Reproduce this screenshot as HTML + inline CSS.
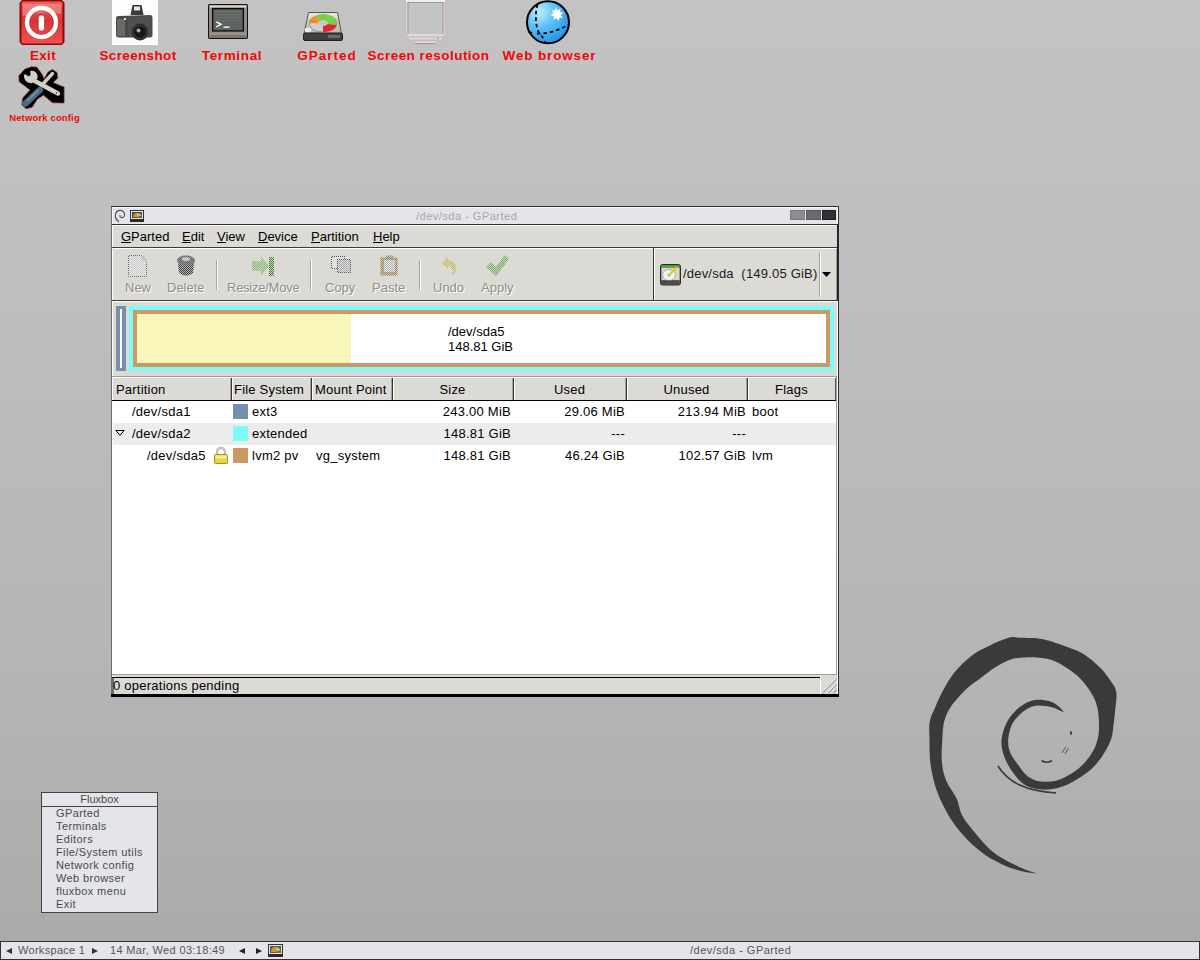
<!DOCTYPE html>
<html><head><meta charset="utf-8">
<style>
*{margin:0;padding:0;box-sizing:border-box}
html,body{width:1200px;height:960px;overflow:hidden}
body{position:relative;background:linear-gradient(to bottom,#c3c3c3 0px,#bebebe 300px,#b4b4b4 700px,#aaaaaa 960px);font-family:"Liberation Sans",sans-serif;color:#000}
.a{position:absolute}
.lbl{position:absolute;color:#ee0808;font-weight:bold;font-size:13.5px;letter-spacing:0.35px;white-space:nowrap;text-align:center;line-height:16px}
.t13{font-size:13px;line-height:16px;white-space:nowrap}
.dis{color:#8f8d88;text-shadow:1px 1px 0 #fff}
.hdr{position:absolute;top:379px;height:22px;font-size:13px;line-height:22px;white-space:nowrap;letter-spacing:0.2px}
.cell{position:absolute;font-size:13px;line-height:16px;white-space:nowrap;color:#000;letter-spacing:0.25px}
.fm{position:absolute;left:56px;font-size:11px;letter-spacing:0.4px;color:#4a4a4a;line-height:13px;white-space:nowrap}
</style></head><body>

<!-- debian swirl -->
<svg class="a" style="left:0;top:0" width="1200" height="960"><path d="M1036.0,873.5 C1034.7,873.5 1027.3,872.6 1022.1,871.3 C1016.9,869.9 1010.7,868.1 1004.6,865.4 C998.5,862.7 991.7,859.3 985.6,855.2 C979.5,851.1 973.5,846.0 968.1,840.6 C962.8,835.2 957.9,829.4 953.5,823.1 C949.1,816.8 945.0,809.2 941.9,802.7 C938.8,796.2 936.5,790.6 934.6,783.8 C932.7,777.0 931.1,769.2 930.2,761.9 C929.4,754.6 929.6,746.7 929.5,740.0 C929.4,733.3 928.8,727.1 929.7,721.7 C930.6,716.4 932.7,713.1 934.9,707.9 C937.1,702.7 939.6,696.6 942.9,690.7 C946.1,684.8 949.6,678.2 954.4,672.4 C959.2,666.6 965.9,660.2 971.6,655.8 C977.3,651.4 982.5,649.0 988.8,646.0 C995.1,643.0 1004.2,639.0 1009.4,637.6 C1014.6,636.2 1014.4,637.5 1020.0,637.8 C1025.6,638.1 1034.9,637.6 1042.9,639.2 C1050.9,640.8 1061.2,644.7 1068.1,647.2 C1075.0,649.8 1078.8,651.1 1084.2,654.5 C1089.6,657.9 1095.9,663.5 1100.2,667.8 C1104.5,672.0 1107.3,676.0 1110.0,680.0 C1112.7,684.0 1115.5,686.7 1116.3,692.0 C1117.1,697.3 1115.5,706.5 1115.0,712.0 C1114.5,717.5 1114.1,720.7 1113.5,725.0 C1112.9,729.3 1112.8,733.8 1111.5,738.0 C1110.2,742.2 1108.3,746.0 1106.0,750.0 C1103.7,754.0 1100.8,758.6 1097.9,762.1 C1095.0,765.6 1092.6,768.2 1088.8,771.3 C1085.0,774.3 1079.8,777.7 1075.0,780.4 C1070.2,783.1 1065.4,785.8 1060.1,787.3 C1054.8,788.8 1048.4,789.8 1042.9,789.6 C1037.4,789.4 1031.6,788.5 1026.9,786.1 C1022.2,783.7 1018.5,779.8 1014.8,775.0 C1011.1,770.2 1006.8,763.3 1004.6,757.5 C1002.4,751.7 1001.1,746.0 1001.5,740.0 C1001.9,734.0 1004.5,726.9 1007.1,721.7 C1009.8,716.5 1013.6,712.4 1017.4,709.0 C1021.2,705.6 1025.8,702.8 1030.0,701.3 C1034.2,699.8 1038.8,699.6 1042.9,699.9 C1047.0,700.2 1051.0,701.3 1054.4,703.3 C1057.8,705.3 1063.9,711.2 1063.5,711.9 C1063.1,712.6 1056.4,708.3 1052.0,707.3 C1047.6,706.2 1041.4,705.3 1037.2,705.6 C1033.0,705.9 1029.9,707.5 1027.0,709.0 C1024.1,710.5 1022.2,712.1 1019.7,714.8 C1017.2,717.5 1013.6,720.8 1011.7,725.0 C1009.8,729.2 1008.4,735.3 1008.2,740.0 C1008.0,744.7 1008.6,748.7 1010.4,753.1 C1012.2,757.5 1016.3,762.4 1019.2,766.3 C1022.1,770.2 1024.4,774.0 1028.0,776.5 C1031.6,779.0 1035.8,781.0 1040.6,781.6 C1045.4,782.2 1051.5,781.8 1056.7,780.4 C1061.9,779.0 1067.0,776.4 1071.6,773.5 C1076.2,770.6 1080.6,767.0 1084.2,763.2 C1087.8,759.4 1091.0,754.8 1093.3,750.6 C1095.6,746.4 1097.0,741.9 1097.9,738.0 C1098.9,734.1 1099.0,731.6 1099.0,727.0 C1099.0,722.4 1098.9,715.3 1097.9,710.2 C1097.0,705.1 1095.8,701.3 1093.3,696.5 C1090.8,691.7 1086.6,685.8 1083.0,681.6 C1079.4,677.4 1076.4,674.7 1071.6,671.3 C1066.8,667.9 1060.1,663.3 1054.4,661.0 C1048.7,658.7 1042.9,658.0 1037.2,657.5 C1031.5,657.0 1024.9,657.3 1020.0,657.8 C1015.1,658.3 1012.2,658.8 1008.0,660.5 C1003.8,662.2 999.0,664.9 994.5,667.8 C990.0,670.7 985.5,674.5 980.7,678.1 C975.9,681.7 970.8,684.8 965.8,689.6 C960.8,694.4 954.5,701.4 950.9,706.8 C947.3,712.1 945.5,716.2 944.1,721.7 C942.7,727.2 942.7,733.3 942.3,740.0 C941.9,746.7 941.2,755.1 941.9,761.9 C942.5,768.7 943.8,774.7 946.2,780.8 C948.6,786.9 953.8,792.5 956.5,798.3 C959.2,804.1 959.1,810.0 962.3,815.8 C965.4,821.6 970.8,827.7 975.4,833.3 C980.0,838.9 985.1,845.0 990.0,849.4 C994.9,853.8 999.7,856.7 1004.6,859.6 C1009.5,862.5 1015.0,865.0 1019.2,866.9 C1023.4,868.8 1027.2,870.2 1030.0,871.3 C1032.8,872.4 1037.3,873.5 1036.0,873.5Z" fill="#3a3a3a"/>
<path d="M998,766 C1008,782 1025,791 1056,793" fill="none" stroke="#3a3a3a" stroke-width="1.6"/>
<ellipse cx="1071" cy="733" rx="1" ry="2" fill="#3a3a3a"/>
<path d="M1041.5,760.5 Q1047,764 1052,760.5" fill="none" stroke="#3a3a3a" stroke-width="1.6"/>
<path d="M1062,753 L1066,746.5 M1065,754 L1068.5,748" stroke="#3a3a3a" stroke-width="0.8"/>
</svg>

<!-- ===== Desktop icons ===== -->
<div id="icons">
<!-- Exit -->
<svg class="a" style="left:19px;top:0px" width="46" height="46" viewBox="0 0 46 46">
  <defs>
    <linearGradient id="exg" x1="0" y1="0" x2="0" y2="1"><stop offset="0" stop-color="#f06060"/><stop offset="0.45" stop-color="#d83434"/><stop offset="1" stop-color="#f25050"/></linearGradient>
  </defs>
  <path d="M3,0 H43 L45.5,3 V42 L43,45 H3 L0.5,42 V3Z" fill="#8a0a0a"/>
  <rect x="2.5" y="1.5" width="41" height="42" rx="2" fill="url(#exg)"/>
  <path d="M4,4 H42 V14 Q23,10 4,16Z" fill="#f8b0b0" opacity="0.45"/>
  <circle cx="22.5" cy="22.5" r="14.4" fill="none" stroke="#fff" stroke-width="4.6"/>
  <circle cx="22.5" cy="22.5" r="12" fill="none" stroke="#a01818" stroke-width="0.8" opacity="0.6"/>
  <rect x="19.3" y="15" width="6.2" height="16" rx="3.1" fill="#fff" stroke="#901010" stroke-width="0.5"/>
</svg>
<!-- Screenshot -->
<svg class="a" style="left:112px;top:0px" width="46" height="46" viewBox="0 0 46 46">
  <rect x="0" y="0" width="46" height="45" fill="#fdfdfd"/>
  <path d="M20.5,5 H29.5 L31.5,15 H18.5Z" fill="#3a3a3a"/>
  <rect x="22" y="6.5" width="6" height="4" fill="#e8e8e8"/>
  <path d="M4,18 Q4,16 7,16 L38,15 Q40.5,15 40.5,18 V35 Q40.5,37.5 38,37.5 H7 Q4,37.5 4,35Z" fill="#4a4a48"/>
  <rect x="5" y="19" width="8" height="17" fill="#6e6a62"/>
  <path d="M16,17 H38 V36 H16Z" fill="#505050"/>
  <circle cx="28" cy="32" r="8.5" fill="#2a3036"/>
  <circle cx="28" cy="32" r="5.5" fill="#15181a"/>
  <circle cx="26.5" cy="30.5" r="2" fill="#d0d0d0" opacity="0.8"/>
  <rect x="12" y="18" width="2" height="2" fill="#ddd"/>
</svg>
<!-- Terminal -->
<svg class="a" style="left:208px;top:4px" width="40" height="36" viewBox="0 0 40 36">
  <rect x="0.5" y="0.5" width="39" height="34" rx="1.5" fill="#98928a" stroke="#151515" stroke-width="1.2"/>
  <rect x="1.5" y="1.5" width="37" height="2" fill="#d8d4cc"/>
  <rect x="4.5" y="4.5" width="31" height="22.5" fill="#4a4e4a" stroke="#0a0a0a" stroke-width="1.2"/>
  <rect x="6" y="6" width="28" height="20" fill="#6a726c" opacity="0.6"/>
  <rect x="6" y="7" width="28" height="1" fill="#7a827c" opacity="0.6"/><rect x="6" y="10" width="28" height="1" fill="#7a827c" opacity="0.5"/><rect x="6" y="13" width="28" height="1" fill="#7a827c" opacity="0.5"/><rect x="6" y="16" width="28" height="1" fill="#7a827c" opacity="0.4"/>
  <path d="M8.3,17.8 L13,20.3 L8.3,22.8" fill="none" stroke="#fff" stroke-width="1.4"/>
  <rect x="15.5" y="22.5" width="6" height="1.3" fill="#fff"/>
  <rect x="2" y="31" width="36" height="3" fill="#7a766e"/>
</svg>
<!-- GParted -->
<svg class="a" style="left:303px;top:12px" width="40" height="29" viewBox="0 0 40 29">
  <defs><linearGradient id="gpb" x1="0" y1="0" x2="0" y2="1"><stop offset="0" stop-color="#e8e8e6"/><stop offset="1" stop-color="#b0b0ae"/></linearGradient></defs>
  <path d="M5.5,0.5 H34.5 L38.5,22 H1Z" fill="url(#gpb)" stroke="#555" stroke-width="1"/>
  <rect x="0.5" y="21" width="39" height="7.5" rx="1.5" fill="#3e403e" stroke="#222"/>
  <rect x="25" y="23" width="12" height="3" fill="#8a8a88" opacity="0.6"/>
  <ellipse cx="20" cy="11.5" rx="14" ry="8.5" fill="#cfcfcd" stroke="#777" stroke-width="0.6"/>
  <path d="M20,11.5 L8,6.5 A14,8.5 0 0 1 12,4 Z" fill="#f09020"/>
  <path d="M20,11.5 L12,4 A14,8.5 0 0 1 34,13 L20,11.5Z" fill="#78d048"/>
  <path d="M20,11.5 L34,13 A14,8.5 0 0 1 20,20 Z" fill="#e02828"/>
  <path d="M20,11.5 L6,11 A14,8.5 0 0 1 8,6.5 Z" fill="#f08a20"/>
  <ellipse cx="20" cy="11" rx="5" ry="3" fill="#c8c8c6"/>
  <ellipse cx="5" cy="18" rx="3.5" ry="2.2" fill="#eee"/>
</svg>
<!-- Screen resolution -->
<svg class="a" style="left:405px;top:0px" width="42" height="46" viewBox="0 0 42 46">
  <rect x="0.5" y="-1" width="40" height="38" fill="#d4d4d4" stroke="#dca8c0" stroke-width="0.8"/>
  <rect x="1" y="0" width="39" height="2" fill="#eeeeec"/>
  <rect x="3" y="2.5" width="35" height="32" fill="#c4c4c4" stroke="#9a9a9a" stroke-width="1"/>
  <rect x="3" y="34" width="35" height="2" fill="#dcdcdc"/>
  <rect x="3.5" y="37" width="34" height="3" fill="#d8d8d8" stroke="#d8a8c0" stroke-width="0.6"/>
  <rect x="9.5" y="41" width="22" height="3.5" fill="#dedede" stroke="#d8a8c0" stroke-width="0.6"/>
  <rect x="10" y="43" width="21" height="1" fill="#999"/>
  <rect x="32" y="37.5" width="1.5" height="1.5" fill="#5c5"/>
</svg>
<!-- Web browser -->
<svg class="a" style="left:525px;top:0px" width="46" height="46" viewBox="0 0 46 46">
  <defs><radialGradient id="glb" cx="0.3" cy="0.25" r="0.85"><stop offset="0" stop-color="#c0ecff"/><stop offset="0.45" stop-color="#5cc0f8"/><stop offset="1" stop-color="#1890e8"/></radialGradient></defs>
  <circle cx="23" cy="22.3" r="21" fill="url(#glb)" stroke="#000" stroke-width="2"/>
  <path d="M12.5,4.5 C10.5,12 10,22 13,31 C15,34 18,37 20,42" fill="none" stroke="#000" stroke-width="1.8" stroke-dasharray="3.5,3"/>
  <path d="M12,33.5 C22,34 32,31 44,24.5" fill="none" stroke="#000" stroke-width="1.8" stroke-dasharray="3.5,3"/><path d="M3,31.5 L7,33" stroke="#000" stroke-width="1.5"/>
  <path d="M31,7 L32.3,10.5 L35.5,8.5 L35,12 L38.7,12.8 L35.8,15 L38,18 L34.5,17.5 L33.5,21 L31.5,18 L28.5,20 L29,16.5 L25.5,15 L28.5,13 L26.5,10 L30,10.5Z" fill="#fff"/>
</svg>
<!-- Network config -->
<svg class="a" style="left:17px;top:65px" width="49" height="46" viewBox="0 0 49 46">
  <path d="M1.8,10.8 L7.8,4.0 L14.5,1.8 L19.8,2.1 L25.0,9.2 L27.2,13.8 L31.0,7.0 L35.5,4.4 L40.0,7.4 L40.8,13.0 L36.2,17.5 L43.0,20.5 L47.1,22.0 L47.1,38.0 L35.5,37.8 L26.5,30.2 L20.5,34.0 L15.2,42.2 L9.2,43.8 L4.8,40.0 L5.5,33.2 L13.0,25.0 L6.2,19.8 L2.1,16.8Z" fill="#000" stroke="#a03030" stroke-width="0.7" stroke-linejoin="round"/>
  <path d="M35.5,8.5 L25,20" stroke="#cfcfc8" stroke-width="3.4" stroke-linecap="round"/>
  <path d="M22.8,25 L8.5,38.5" stroke="#4a6a8a" stroke-width="6.5" stroke-linecap="round"/>
  <path d="M21,25.5 L10.5,35.5" stroke="#8aa8c8" stroke-width="1.6" stroke-linecap="round" opacity="0.7"/>
  <path d="M16,15 L41,28.5" stroke="#d4d0c6" stroke-width="4.4" stroke-linecap="round"/>
  <path d="M15.5,17.5 C11,18 7,14.5 8,10 L11.5,12.5 L14.5,10.5 L14,6.5 C18,6 21,10 19.5,14" fill="#d4d0c6" stroke="#d4d0c6" stroke-width="1.6" stroke-linejoin="round"/>
  <circle cx="39.5" cy="27.8" r="0.9" fill="#555"/>
</svg>
<div class="lbl" style="left:3px;top:48px;width:80px">Exit</div>
<div class="lbl" style="left:88px;top:48px;width:100px">Screenshot</div>
<div class="lbl" style="left:181px;top:48px;width:100px;letter-spacing:0.64px;padding-left:2px">Terminal</div>
<div class="lbl" style="left:276px;top:48px;width:100px;letter-spacing:1.0px;padding-left:2px">GParted</div>
<div class="lbl" style="left:358px;top:48px;width:140px;letter-spacing:0.47px;padding-left:1px">Screen resolution</div>
<div class="lbl" style="left:499px;top:48px;width:100px;letter-spacing:0.85px;padding-left:1px">Web browser</div>
<div class="lbl" style="left:0px;top:112px;width:89px;font-size:9.5px;letter-spacing:0.15px;line-height:12px">Network config</div>
</div>

<!-- ===== Window ===== -->
<div id="win">
  <div class="a" style="left:111px;top:206px;width:728px;height:491px;background:#2e2e2e"></div>
  <div class="a" style="left:111px;top:207px;width:1px;height:488px;background:#6c6c6c"></div>
  <!-- title bar -->
  <div class="a" style="left:112px;top:207px;width:726px;height:17px;background:#e4e5ea;border-top:1px solid #fafafc;border-left:1px solid #fafafc;border-right:1px solid #fafafc"></div>
  <div class="a" style="left:416px;top:209px;height:15px;font-size:11px;letter-spacing:0.5px;line-height:15px;color:#a6a6a8;white-space:nowrap">/dev/sda - GParted</div>
  <svg class="a" style="left:114px;top:209px" width="13" height="14" viewBox="0 0 13 14"><path d="M5,12.8 C2.2,11 1,8.2 1.5,5.5 C2,2.8 4.2,1.3 6.5,1.4 C9,1.5 10.8,3.5 10.6,5.8 C10.4,8 8.6,9 7.2,8.6 C6,8.2 5.6,7 6.2,6" fill="none" stroke="#4a4a4a" stroke-width="1.1"/></svg>
  <svg class="a" style="left:130px;top:210px" width="14" height="12" viewBox="0 0 14 12"><rect x="0.5" y="0.5" width="13" height="11" fill="#e8e8e0" stroke="#333"/><rect x="2" y="2" width="10" height="6" fill="#445"/><path d="M3,7 Q3,3 7,3 L7,7Z" fill="#f08a20"/><path d="M7,3 Q11,3 11.5,6 L7,7Z" fill="#8ce06a"/><path d="M7,7 L11.5,6 L11,8 L7,8Z" fill="#e03838"/><rect x="0" y="9" width="14" height="3" fill="#2a2a2a"/></svg>
  <div class="a" style="left:790px;top:210px;width:15px;height:10px;background:#8d8d8d;border:1px solid #7a7a7a"></div>
  <div class="a" style="left:806px;top:210px;width:15px;height:10px;background:#6b6b6b;border:1px solid #5a5a5a"></div>
  <div class="a" style="left:822px;top:210px;width:14px;height:10px;background:#333;border:1px solid #1e1e1e"></div>

  <!-- client bg -->
  <div class="a" style="left:112px;top:225px;width:726px;height:470px;background:#dcdad5;border-left:1px solid #fff"></div>
  <div class="a" style="left:837px;top:225px;width:1px;height:76px;background:#1e1e1e"></div><div class="a" style="left:837px;top:301px;width:1px;height:393px;background:#fff"></div><div class="a" style="left:836px;top:248px;width:1px;height:52px;background:#a09d95"></div>

  <!-- menubar -->
  <div class="a" style="left:112px;top:225px;width:725px;height:1px;background:#fff"></div>
  <div class="a" style="left:112px;top:247px;width:725px;height:1px;background:#3c3b37"></div>
  <div class="a t13" style="left:121px;top:229px">GParted</div>
  <div class="a t13" style="left:182px;top:229px">Edit</div>
  <div class="a t13" style="left:217px;top:229px">View</div>
  <div class="a t13" style="left:258px;top:229px">Device</div>
  <div class="a t13" style="left:311px;top:229px">Partition</div>
  <div class="a t13" style="left:373px;top:229px">Help</div>
  <div class="a" style="left:121px;top:242px;width:10px;height:1px;background:#000"></div>
  <div class="a" style="left:182px;top:242px;width:9px;height:1px;background:#000"></div>
  <div class="a" style="left:217px;top:242px;width:9px;height:1px;background:#000"></div>
  <div class="a" style="left:258px;top:242px;width:10px;height:1px;background:#000"></div>
  <div class="a" style="left:311px;top:242px;width:9px;height:1px;background:#000"></div>
  <div class="a" style="left:373px;top:242px;width:10px;height:1px;background:#000"></div>

  <!-- toolbar -->
  <div class="a" style="left:112px;top:248px;width:725px;height:1px;background:#fff"></div>
  <div class="a" style="left:112px;top:300px;width:725px;height:1px;background:#3c3b37"></div>
  <div class="a" style="left:653px;top:248px;width:1px;height:52px;background:#3c3b37"></div>
  <div class="a" style="left:654px;top:248px;width:1px;height:52px;background:#fff"></div>
  <div class="a" style="left:216px;top:260px;width:1px;height:30px;background:#a8a59e"></div>
  <div class="a" style="left:217px;top:260px;width:1px;height:30px;background:#fff"></div>
  <div class="a" style="left:310px;top:260px;width:1px;height:30px;background:#a8a59e"></div>
  <div class="a" style="left:311px;top:260px;width:1px;height:30px;background:#fff"></div>
  <div class="a" style="left:419px;top:260px;width:1px;height:30px;background:#a8a59e"></div>
  <div class="a" style="left:420px;top:260px;width:1px;height:30px;background:#fff"></div>
  <div class="a t13 dis" style="left:125px;top:280px">New</div>
  <div class="a t13 dis" style="left:167px;top:280px">Delete</div>
  <div class="a t13 dis" style="left:227px;top:280px;letter-spacing:-0.25px">Resize/Move</div>
  <div class="a t13 dis" style="left:325px;top:280px">Copy</div>
  <div class="a t13 dis" style="left:372px;top:280px">Paste</div>
  <div class="a t13 dis" style="left:433px;top:280px">Undo</div>
  <div class="a t13 dis" style="left:481px;top:280px">Apply</div>
  <svg class="a" style="left:112px;top:248px" width="420" height="40" viewBox="112 248 420 40">
  <defs>
    <pattern id="dth" patternUnits="userSpaceOnUse" x="0" y="0" width="2" height="2"><rect x="0" y="0" width="1" height="1" fill="#fff"/><rect x="1" y="1" width="1" height="1" fill="#fff"/></pattern>
    <mask id="dm"><rect x="112" y="248" width="420" height="40" fill="url(#dth)"/></mask>
    <pattern id="dthw" patternUnits="userSpaceOnUse" width="2" height="2"><rect x="1" y="0" width="1" height="1" fill="#fff"/><rect x="0" y="1" width="1" height="1" fill="#fff"/></pattern>
    <mask id="dmw"><rect x="112" y="248" width="420" height="40" fill="#fff"/><rect x="112" y="248" width="420" height="40" fill="url(#dth)"/></mask>
  </defs>
  <!-- New -->
  <g>
    <path d="M128.5,255.5 H141.5 L146.5,261 V276.5 H128.5Z" fill="#e6e6e6"/>
    <path d="M128.5,255.5 H141.5 L146.5,261 V276.5 H128.5Z" fill="none" stroke="#6a6a6a" stroke-width="1" mask="url(#dm)"/>
    <path d="M141.5,255.5 V261 H146.5" fill="#cfcfcf"/>
    <rect x="129" y="256" width="17" height="20" fill="#bdbdbd" mask="url(#dm)" opacity="0.6"/>
  </g>
  <!-- Delete -->
  <g>
    <path d="M178,263 H194 L193,273 Q186,278.5 179,273Z" fill="#a8a8a8" opacity="0.6"/>
    <path d="M178,263 H194 L193,273 Q186,278.5 179,273Z" fill="#3a3a3a" mask="url(#dm)"/>
    <ellipse cx="186" cy="260.5" rx="9" ry="5" fill="#8e8e8e"/>
    <ellipse cx="186" cy="260.5" rx="9" ry="5" fill="#555" mask="url(#dm)" opacity="0.6"/>
    <ellipse cx="186" cy="259" rx="4" ry="2" fill="#c4c4c4"/>
  </g>
  <!-- Resize/Move -->
  <g mask="url(#dm)">
    <path d="M252,261 H261 V257 L269,266 L261,275 V271 H252Z" fill="#5a9048"/>
    <rect x="269" y="257" width="5" height="19" fill="#3a7a2a"/>
  </g>
  <path d="M252,261 H261 V257 L269,266 L261,275 V271 H252Z" fill="#b8d4a8" opacity="0.6"/>
  <!-- Copy -->
  <g>
    <rect x="331" y="256" width="14" height="13" fill="#e0e0e0"/>
    <rect x="331.5" y="256.5" width="13" height="12" fill="none" stroke="#555" mask="url(#dm)"/>
    <rect x="337" y="259" width="14" height="14" fill="#d8d8d8"/>
    <rect x="337.5" y="259.5" width="13" height="13" fill="none" stroke="#555" mask="url(#dm)"/>
    <rect x="338" y="260" width="12" height="12" fill="#888" mask="url(#dm)" opacity="0.5"/>
  </g>
  <!-- Paste -->
  <g>
    <rect x="380.5" y="257.5" width="17" height="18" fill="#7a5a2a" mask="url(#dm)"/>
    <rect x="381" y="258" width="16" height="17" fill="#c4ae88" opacity="0.5"/>
    <rect x="384" y="260" width="11" height="12" fill="#e8e8e8"/>
    <rect x="384" y="260" width="11" height="12" fill="#777" mask="url(#dm)" opacity="0.5"/>
    <rect x="386" y="255.5" width="7" height="4" fill="#777" mask="url(#dm)"/>
  </g>
  <!-- Undo -->
  <g mask="url(#dm)">
    <path d="M442,263 L448,257 V260.5 C453,260.5 457,264 456,270 C455.5,272.5 454,274 452,275 C453.5,272 453,266 448,266 V269Z" fill="#a89428"/>
  </g>
  <path d="M442,263 L448,257 V260.5 C453,260.5 457,264 456,270 C455.5,272.5 454,274 452,275 C453.5,272 453,266 448,266 V269Z" fill="#e0d8a0" opacity="0.5"/>
  <!-- Apply -->
  <path d="M487,267 L491,263 L496,268 L505,256 L508,259 L496,275Z" fill="#c4dcb8" stroke="#c4dcb8" stroke-width="1.5" stroke-linejoin="round"/>
  <path d="M487,267 L491,263 L496,268 L505,256 L508,259 L496,275Z" fill="#7aa86a" stroke="#7aa86a" stroke-width="1.5" stroke-linejoin="round" mask="url(#dm)"/>
</svg>


  <!-- device combo -->
  <svg class="a" style="left:660px;top:264px" width="21" height="22" viewBox="0 0 21 22">
  <rect x="0.5" y="0.5" width="20" height="20.5" rx="2" fill="#6a6c68" stroke="#2a2a2a"/>
  <rect x="1.5" y="1.5" width="18" height="4" fill="#5aa840"/>
  <rect x="1.5" y="4" width="18" height="12" fill="#d8d8d0"/>
  <ellipse cx="9" cy="11" rx="6.5" ry="5.5" fill="#f4f4ec" stroke="#9a9a90" stroke-width="0.8"/>
  <ellipse cx="9" cy="11" rx="2" ry="1.6" fill="#b8b8b0"/>
  <path d="M10,10 L17,3" stroke="#e8c020" stroke-width="2"/>
  <rect x="1.5" y="16.5" width="18" height="4" fill="#4a4c48"/>
</svg>

  <div class="a t13" style="left:683px;top:266px;letter-spacing:0.2px;color:#1a1a1a">/dev/sda&nbsp;&nbsp;(149.05 GiB)</div>
  <div class="a" style="left:819px;top:252px;width:1px;height:45px;background:#a8a59e"></div>
  <div class="a" style="left:820px;top:252px;width:1px;height:45px;background:#fff"></div>
  <svg class="a" style="left:822px;top:272px" width="9" height="5"><path d="M0,0 L9,0 L4.5,5Z" fill="#000"/></svg>

  <!-- partition graph -->
  <div class="a" style="left:112px;top:301px;width:725px;height:1px;background:#fff"></div>
  <div class="a" style="left:116px;top:306px;width:10px;height:65px;background:#7390ae"></div>
  <div class="a" style="left:120px;top:309px;width:2px;height:59px;background:#fff"></div>
  <div class="a" style="left:129px;top:306px;width:705px;height:65px;background:#7dfbfb"></div>
  <div class="a" style="left:133px;top:310px;width:697px;height:57px;background:#cc9966"></div>
  <div class="a" style="left:137px;top:314px;width:689px;height:49px;background:#fff"></div>
  <div class="a" style="left:137px;top:314px;width:214px;height:49px;background:#f8f6b8"></div>
  <div class="a t13" style="left:448px;top:324px;line-height:15px">/dev/sda5<br>148.81 GiB</div>

  <!-- tree -->
  <div class="a" style="left:112px;top:376px;width:725px;height:1px;background:#a09d95"></div>
  <div class="a" style="left:112px;top:377px;width:724px;height:297px;background:#fff"></div>
  <div class="a" style="left:836px;top:377px;width:1px;height:298px;background:#a09d95"></div>
  <div class="a" style="left:112px;top:674px;width:725px;height:1px;background:#a09d95"></div>
  <div class="a" style="left:113px;top:378px;width:723px;height:22px;background:#dcdad5"></div>
  <div class="a" style="left:112px;top:400px;width:724px;height:1px;background:#000"></div>
    <div class="hdr" style="left:116px">Partition</div>
  <div class="hdr" style="left:234px">File System</div>
  <div class="hdr" style="left:315px">Mount Point</div>
  <div class="hdr" style="left:392px;width:121px;text-align:center">Size</div>
  <div class="hdr" style="left:513px;width:113px;text-align:center">Used</div>
  <div class="hdr" style="left:626px;width:121px;text-align:center">Unused</div>
  <div class="hdr" style="left:747px;width:89px;text-align:center">Flags</div>
  <div class="a" style="left:113px;top:423px;width:723px;height:22px;background:#ececec"></div>
  <div id="rows">
  <div class="a" style="left:230px;top:378px;width:1px;height:22px;background:#a8a49c"></div><div class="a" style="left:231px;top:378px;width:1px;height:22px;background:#333"></div><div class="a" style="left:232px;top:378px;width:1px;height:22px;background:#fff"></div>
  <div class="a" style="left:310px;top:378px;width:1px;height:22px;background:#a8a49c"></div><div class="a" style="left:311px;top:378px;width:1px;height:22px;background:#333"></div><div class="a" style="left:312px;top:378px;width:1px;height:22px;background:#fff"></div>
  <div class="a" style="left:391px;top:378px;width:1px;height:22px;background:#a8a49c"></div><div class="a" style="left:392px;top:378px;width:1px;height:22px;background:#333"></div><div class="a" style="left:393px;top:378px;width:1px;height:22px;background:#fff"></div>
  <div class="a" style="left:512px;top:378px;width:1px;height:22px;background:#a8a49c"></div><div class="a" style="left:513px;top:378px;width:1px;height:22px;background:#333"></div><div class="a" style="left:514px;top:378px;width:1px;height:22px;background:#fff"></div>
  <div class="a" style="left:625px;top:378px;width:1px;height:22px;background:#a8a49c"></div><div class="a" style="left:626px;top:378px;width:1px;height:22px;background:#333"></div><div class="a" style="left:627px;top:378px;width:1px;height:22px;background:#fff"></div>
  <div class="a" style="left:746px;top:378px;width:1px;height:22px;background:#a8a49c"></div><div class="a" style="left:747px;top:378px;width:1px;height:22px;background:#333"></div><div class="a" style="left:748px;top:378px;width:1px;height:22px;background:#fff"></div>
  <div class="a" style="left:835px;top:378px;width:1px;height:22px;background:#555"></div>
  <div class="a" style="left:112px;top:377px;width:1px;height:23px;background:#fff"></div>

  <div class="cell" style="left:132px;top:404px">/dev/sda1</div>
  <div class="cell" style="left:132px;top:426px">/dev/sda2</div>
  <div class="cell" style="left:147px;top:448px">/dev/sda5</div>
  <svg class="a" style="left:115px;top:430px" width="10" height="6"><path d="M0.8,0.5 L9.2,0.5 L5,5.3Z" fill="none" stroke="#000" stroke-width="1"/></svg>
  <div class="a" style="left:233px;top:404px;width:15px;height:15px;background:#7390ae"></div>
  <div class="a" style="left:233px;top:426px;width:15px;height:15px;background:#7dfbfb"></div>
  <div class="a" style="left:233px;top:448px;width:15px;height:15px;background:#cc9966"></div>
  <div class="cell" style="left:252px;top:404px">ext3</div>
  <div class="cell" style="left:252px;top:426px">extended</div>
  <div class="cell" style="left:252px;top:448px">lvm2 pv</div>
  <div class="cell" style="left:316px;top:448px">vg_system</div>
  <div class="cell" style="left:392px;top:404px;width:119px;text-align:right">243.00 MiB</div>
  <div class="cell" style="left:392px;top:426px;width:119px;text-align:right">148.81 GiB</div>
  <div class="cell" style="left:392px;top:448px;width:119px;text-align:right">148.81 GiB</div>
  <div class="cell" style="left:513px;top:404px;width:112px;text-align:right">29.06 MiB</div>
  <div class="cell" style="left:513px;top:426px;width:112px;text-align:right">---</div>
  <div class="cell" style="left:513px;top:448px;width:112px;text-align:right">46.24 GiB</div>
  <div class="cell" style="left:626px;top:404px;width:120px;text-align:right">213.94 MiB</div>
  <div class="cell" style="left:626px;top:426px;width:120px;text-align:right">---</div>
  <div class="cell" style="left:626px;top:448px;width:120px;text-align:right">102.57 GiB</div>
  <div class="cell" style="left:752px;top:404px">boot</div>
  <div class="cell" style="left:752px;top:448px">lvm</div>
  <!-- lock -->
  <svg class="a" style="left:213px;top:446px" width="16" height="19" viewBox="0 0 16 19">
    <path d="M4,9 V6 A4,4.2 0 0 1 12,6 V9" fill="none" stroke="#9a9a9a" stroke-width="2.2"/>
    <path d="M4,9 V6 A4,4.2 0 0 1 12,6 V9" fill="none" stroke="#e8e8e8" stroke-width="0.9"/>
    <rect x="1.5" y="8.5" width="13" height="9" rx="1" fill="#e6d640" stroke="#a09020" stroke-width="1"/>
    <rect x="2.5" y="9.5" width="11" height="3" fill="#f6ee90"/>
  </svg>
</div>


  <!-- status bar -->
  <div class="a" style="left:112px;top:677px;width:709px;height:1px;background:#000"></div>
  <div class="a" style="left:112px;top:678px;width:2px;height:16px;background:#6e6c67"></div>
  <div class="a t13" style="left:113px;top:678px;letter-spacing:0.25px">0 operations pending</div>
  <div class="a" style="left:111px;top:694px;width:728px;height:3px;background:#000"></div>
  <div class="a" style="left:820px;top:677px;width:1px;height:17px;background:#fff"></div><svg class="a" style="left:821px;top:676px" width="16" height="18"><path d="M1.5,17 L15.5,3 M7,17 L15.5,8.5 M12,17 L15.5,13.5" stroke="#9a968e" stroke-width="1.2"/><path d="M0.5,17 L14.5,3 M6,17 L14.5,8.5 M11,17 L14.5,13.5" stroke="#fff" stroke-width="0.8"/></svg>
</div>

<!-- ===== Fluxbox menu ===== -->
<div class="a" style="left:41px;top:792px;width:117px;height:121px;background:#e4e5ea;border:1px solid #444"></div>
<div class="a" style="left:41px;top:806px;width:117px;height:1px;background:#444"></div>
<div class="a" style="left:41px;top:793px;width:117px;font-size:11px;line-height:13px;text-align:center;color:#4a4a4a">Fluxbox</div>
<div class="fm" style="top:807px">GParted</div>
<div class="fm" style="top:820px">Terminals</div>
<div class="fm" style="top:833px">Editors</div>
<div class="fm" style="top:846px">File/System utils</div>
<div class="fm" style="top:859px">Network config</div>
<div class="fm" style="top:872px">Web browser</div>
<div class="fm" style="top:885px">fluxbox menu</div>
<div class="fm" style="top:898px">Exit</div>

<!-- ===== Bottom toolbar ===== -->
<div class="a" style="left:0;top:941px;width:1200px;height:19px;background:#e4e5ea;border:1px solid #333"></div>
<div class="a" style="left:18px;top:944px;font-size:11px;letter-spacing:0.3px;line-height:13px;color:#555">Workspace 1</div>
<div class="a" style="left:110px;top:944px;font-size:11px;letter-spacing:0.35px;line-height:13px;color:#555">14 Mar, Wed 03:18:49</div>
<div class="a" style="left:690px;top:944px;font-size:11px;letter-spacing:0.5px;line-height:13px;color:#555">/dev/sda - GParted</div>
<svg class="a" style="left:0;top:941px" width="300" height="19">
  <path d="M6,10 L12,7 V13Z" fill="#333"/>
  <path d="M98,10 L92,7 V13Z" fill="#333"/>
  <path d="M239,10 L245,7 V13Z" fill="#222"/>
  <path d="M262,10 L256,7 V13Z" fill="#222"/>
  <rect x="268.5" y="3.5" width="14" height="12" fill="#e8e8e0" stroke="#333"/>
  <rect x="270" y="5" width="11" height="7" fill="#556"/>
  <path d="M271,11 Q271,6 275.5,6 L275.5,11Z" fill="#f08a20"/>
  <path d="M275.5,6 Q280,6 280.5,9.5 L275.5,11Z" fill="#8ce06a"/>
  <path d="M275.5,11 L280.5,9.5 L280,12 L275.5,12Z" fill="#e03838"/>
  <rect x="268" y="13" width="15" height="3" fill="#2a2a2a"/>
</svg>

</body></html>
